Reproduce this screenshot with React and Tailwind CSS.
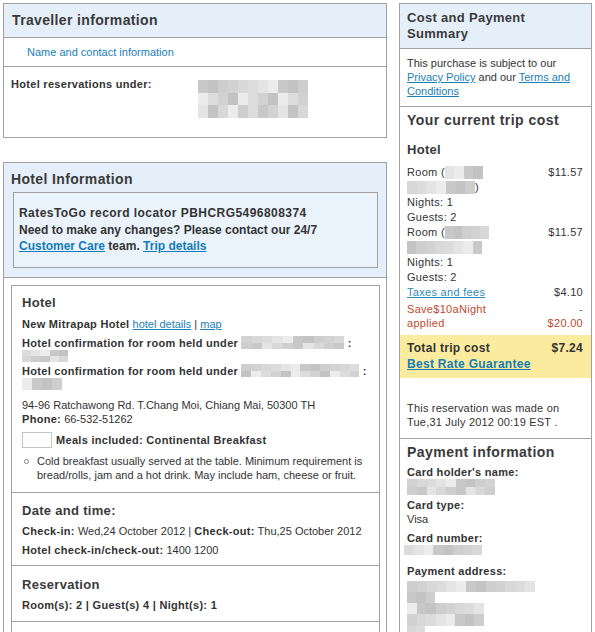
import React from "react";

const SHADES = [
  "bg-[#e4e4e4]",
  "bg-[#d2d2d2]",
  "bg-[#c8c8c8]",
  "bg-[#dcdcdc]",
  "bg-[#cecece]",
  "bg-[#ececec]",
  "bg-[#d8d8d8]",
  "bg-[#c3c3c3]",
];

// pixelated placeholder for the redacted names / numbers
function Blur({ className = "", rows = 1, cols = 6, seed = 0, block = false }) {
  return (
    <span className={`${block ? "flex" : "inline-flex align-top"} flex-col ${className}`}>
      {Array.from({ length: rows }).map((_, r) => (
        <span key={r} className="flex flex-1">
          {Array.from({ length: cols }).map((_, c) => (
            <span key={c} className={`flex-1 ${SHADES[(seed + r * 3 + c * 5 + r * c) % SHADES.length]}`} />
          ))}
        </span>
      ))}
    </span>
  );
}

const link = "text-[#1a80b6] underline";

export default function App() {
  return (
    <div className="w-[595px] h-[632px] overflow-hidden bg-white font-['Liberation_Sans',Arial,sans-serif] text-[#333]">
      <div className="flex items-start gap-[12px] pt-[3px] pl-[3px]">
        {/* Left column */}
        <div className="w-[384px] flex flex-col gap-[24px]">
          {/* Traveller information */}
          <section className="border border-[#a0a0a0]">
            <div className="h-[34px] bg-[#e5eff9] border-b border-[#a0a0a0] px-[8px] flex items-center">
              <h2 className="text-[14px] font-bold tracking-[0.35px] text-[#3a3a3a]">Traveller information</h2>
            </div>
            <div className="h-[29px] border-b border-[#a0a0a0] pl-[23px] flex items-center text-[11px] text-[#1a80b6]">
              Name and contact information
            </div>
            <div className="h-[70px] pl-[7px] pt-[10px] flex items-start">
              <span className="w-[187px] text-[11px] leading-[14px] font-bold tracking-[0.3px]">Hotel reservations under:</span>
              <Blur block className="w-[110px] h-[38px] mt-[3px]" rows={3} cols={11} seed={2} />
            </div>
          </section>

          {/* Hotel Information */}
          <section className="border border-[#a0a0a0]">
            <div className="bg-[#e5eff9] border-b border-[#a0a0a0] pt-[7px] pb-[9px]">
              <h2 className="px-[7px] text-[14px] leading-[18px] font-bold tracking-[0.35px] text-[#3a3a3a]">Hotel Information</h2>
              <div className="ml-[9px] mr-[8px] mt-[4px] bg-[#eaf3fc] border border-[#a0a0a0] px-[5px] pt-[11px] pb-[13px] text-[12px] font-bold">
                <p className="leading-[18px] tracking-[0.45px]">RatesToGo record locator PBHCRG5496808374</p>
                <p className="leading-[16px]">
                  Need to make any changes? Please contact our 24/7{" "}
                  <span className="text-[#137cb6] underline">Customer Care</span> team.{" "}
                  <span className="text-[#137cb6] underline">Trip details</span>
                </p>
              </div>
            </div>

            <div className="pt-[7px] pb-[40px]">
              <div className="ml-[7px] mr-[6px] border border-[#a0a0a0] text-[11px] leading-[14px]">
                {/* Hotel */}
                <div className="px-[10px] pt-[9px] pb-[10px] border-b border-[#a0a0a0]">
                  <h3 className="text-[13px] leading-[16px] font-bold tracking-[0.3px] text-[#3a3a3a]">Hotel</h3>
                  <p className="mt-[6px]">
                    <b className="tracking-[0.3px]">New Mitrapap Hotel</b>{" "}
                    <span className={link}>hotel details</span> | <span className={link}>map</span>
                  </p>
                  <p className="mt-[5px] h-[14px] font-bold tracking-[0.3px]">
                    Hotel confirmation for room held under{" "}
                    <Blur className="w-[103px] h-[13px]" rows={2} cols={10} seed={1} /> :
                  </p>
                  <Blur block className="w-[46px] h-[12px]" rows={2} cols={5} seed={3} />
                  <p className="mt-[2px] h-[14px] font-bold tracking-[0.3px]">
                    Hotel confirmation for room held under{" "}
                    <Blur className="w-[118px] h-[13px]" rows={2} cols={12} seed={4} /> :
                  </p>
                  <Blur block className="w-[40px] h-[12px]" rows={1} cols={4} seed={5} />
                  <p className="mt-[8px]">94-96 Ratchawong Rd. T.Chang Moi, Chiang Mai, 50300 TH</p>
                  <p>
                    <b className="tracking-[0.3px]">Phone:</b> 66-532-51262
                  </p>
                  <div className="mt-[6px] flex items-center gap-[4px]">
                    <span className="w-[30px] h-[16px] border border-[#c4c4c4]" />
                    <b className="tracking-[0.3px]">Meals included: Continental Breakfast</b>
                  </div>
                  <div className="mt-[6px] flex items-start">
                    <span className="mt-[5px] ml-[2px] w-[5px] h-[5px] rounded-full border border-[#8a8a8a] shrink-0" />
                    <p className="ml-[8px]">
                      Cold breakfast usually served at the table. Minimum requirement is bread/rolls, jam and a hot drink. May include ham, cheese or fruit.
                    </p>
                  </div>
                </div>

                {/* Date and time */}
                <div className="px-[10px] pt-[10px] pb-[8px] border-b border-[#a0a0a0]">
                  <h3 className="text-[13px] leading-[16px] font-bold tracking-[0.3px] text-[#3a3a3a]">Date and time:</h3>
                  <p className="mt-[5px]">
                    <b className="tracking-[0.3px]">Check-in:</b> Wed,24 October 2012 | <b className="tracking-[0.3px]">Check-out:</b> Thu,25 October 2012
                  </p>
                  <p className="mt-[5px]">
                    <b className="tracking-[0.3px]">Hotel check-in/check-out:</b> 1400 1200
                  </p>
                </div>

                {/* Reservation */}
                <div className="px-[10px] pt-[11px] pb-[9px] border-b border-[#a0a0a0]">
                  <h3 className="text-[13px] leading-[16px] font-bold tracking-[0.3px] text-[#3a3a3a]">Reservation</h3>
                  <p className="mt-[5px] font-bold tracking-[0.3px]">Room(s): 2 | Guest(s) 4 | Night(s): 1</p>
                </div>

                <div className="h-[60px]" />
              </div>
            </div>
          </section>
        </div>

        {/* Right column */}
        <aside className="w-[193px] border border-[#a0a0a0] pb-[20px]">
          <div className="bg-[#e5eff9] border-b border-[#a0a0a0] px-[7px] py-[6px]">
            <h2 className="text-[13px] leading-[16px] font-bold tracking-[0.3px] text-[#3a3a3a]">
              Cost and Payment
              <br />
              Summary
            </h2>
          </div>
          <div className="px-[7px] pt-[7px] pb-[8px] border-b border-[#a0a0a0] text-[11px] leading-[14px]">
            This purchase is subject to our <span className={link}>Privacy Policy</span> and our{" "}
            <span className={link}>Terms and</span> <span className={link}>Conditions</span>
          </div>

          <div className="pt-[4px] pb-[9px] border-b border-[#a0a0a0]">
            <h2 className="px-[7px] text-[14px] leading-[18px] font-bold tracking-[0.45px] text-[#3a3a3a]">Your current trip cost</h2>
            <h3 className="px-[7px] mt-[13px] text-[13px] leading-[16px] font-bold tracking-[0.3px] text-[#3a3a3a]">Hotel</h3>

            <div className="mt-[7px] pl-[7px] pr-[8px] text-[11px] leading-[15px] tracking-[0.3px]">
              <div className="h-[15px] flex justify-between">
                <span>
                  Room (<Blur className="w-[38px] h-[13px] mt-[1px]" rows={1} cols={4} seed={0} />
                </span>
                <span>$11.57</span>
              </div>
              <div className="h-[15px]">
                <Blur className="w-[68px] h-[13px] mt-[1px]" rows={1} cols={7} seed={6} />)
              </div>
              <div>Nights: 1</div>
              <div>Guests: 2</div>
              <div className="h-[15px] flex justify-between">
                <span>
                  Room (<Blur className="w-[44px] h-[13px] mt-[1px]" rows={1} cols={5} seed={2} />
                </span>
                <span>$11.57</span>
              </div>
              <div className="h-[15px]">
                <Blur className="w-[75px] h-[13px] mt-[1px]" rows={1} cols={8} seed={7} />
              </div>
              <div>Nights: 1</div>
              <div>Guests: 2</div>
              <div className="flex justify-between">
                <span className="text-[#2f8cb8] underline">Taxes and fees</span>
                <span>$4.10</span>
              </div>
              <div className="mt-[2px] flex justify-between leading-[14px] text-[#bd4a2d]">
                <span>
                  Save$10aNight
                  <br />
                  applied
                </span>
                <span className="text-right">
                  -
                  <br />
                  $20.00
                </span>
              </div>
            </div>

            <div className="mt-[5px] bg-[#fbeb9e] pl-[7px] pr-[8px] pt-[5px] pb-[6px] text-[12px] leading-[16px] font-bold tracking-[0.3px]">
              <div className="flex justify-between">
                <span>Total trip cost</span>
                <span>$7.24</span>
              </div>
              <div className="text-[#137cb6] underline">Best Rate Guarantee</div>
            </div>

            <p className="mt-[23px] px-[7px] text-[11px] leading-[14px] tracking-[0.2px]">
              This reservation was made on Tue,31 July 2012 00:19 EST .
            </p>
          </div>

          {/* Payment information */}
          <div className="px-[7px] pt-[4px] text-[11px] leading-[14px]">
            <h2 className="text-[14px] leading-[18px] font-bold tracking-[0.45px] text-[#3a3a3a]">Payment information</h2>
            <p className="mt-[4px] font-bold tracking-[0.3px]">Card holder's name:</p>
            <Blur block className="w-[88px] h-[16px]" rows={2} cols={9} seed={1} />
            <p className="mt-[3px] font-bold tracking-[0.3px]">Card type:</p>
            <p>Visa</p>
            <p className="mt-[5px] font-bold tracking-[0.3px]">Card number:</p>
            <Blur block className="w-[78px] h-[10px] -ml-[3px]" rows={1} cols={8} seed={3} />
            <p className="mt-[9px] font-bold tracking-[0.3px]">Payment address:</p>
            <div className="mt-[3px] flex flex-col">
              <Blur block className="w-[128px] h-[11px]" rows={1} cols={13} seed={4} />
              <Blur block className="w-[28px] h-[11px]" rows={1} cols={3} seed={2} />
              <Blur block className="w-[77px] h-[11px]" rows={1} cols={8} seed={5} />
              <Blur block className="w-[77px] h-[12px]" rows={1} cols={8} seed={1} />
              <Blur block className="w-[18px] h-[10px]" rows={1} cols={2} seed={6} />
            </div>
          </div>
        </aside>
      </div>
    </div>
  );
}
